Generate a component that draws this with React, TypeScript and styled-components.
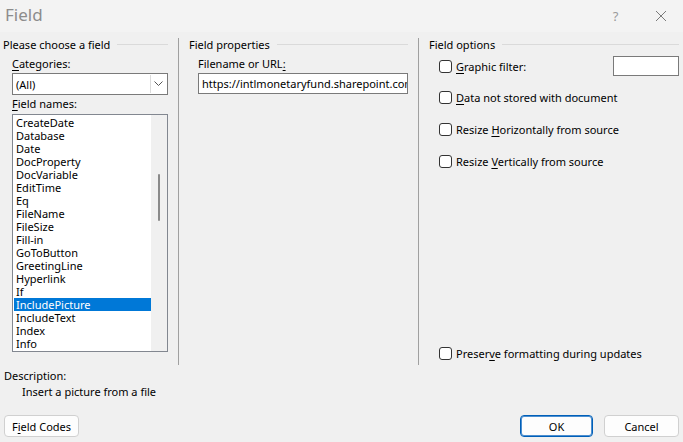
import React from "react";
import styled, { createGlobalStyle } from "styled-components";

const GlobalStyle = createGlobalStyle`
  html, body {
    margin: 0;
    padding: 0;
    background: #f0f0f0;
  }
  body {
    font-family: "Noto Sans", "Segoe UI", sans-serif;
    font-size: 11px;
    color: #000;
  }
`;

const FIELD_NAMES = [
  "CreateDate",
  "Database",
  "Date",
  "DocProperty",
  "DocVariable",
  "EditTime",
  "Eq",
  "FileName",
  "FileSize",
  "Fill-in",
  "GoToButton",
  "GreetingLine",
  "Hyperlink",
  "If",
  "IncludePicture",
  "IncludeText",
  "Index",
  "Info",
];

const SELECTED = "IncludePicture";

const Dialog = styled.div`
  width: 683px;
  height: 442px;
  display: flex;
  flex-direction: column;
  background: #f0f0f0;
  overflow: hidden;
`;

const TitleBar = styled.div`
  height: 32px;
  flex: none;
  display: flex;
  align-items: center;
  background: #f3f3f3;
  padding-left: 5px;
`;

const Title = styled.div`
  font-size: 17px;
  color: #8c8c8c;
  flex: 1;
  margin-top: -4px;
`;

const TitleButton = styled.div`
  width: 45px;
  height: 32px;
  display: flex;
  align-items: center;
  justify-content: center;
  color: #9a9a9a;
  font-size: 13px;
`;

const Columns = styled.div`
  display: flex;
  height: 327px;
  margin-top: 6px;
  padding-left: 3px;
`;

const Column = styled.div<{ $w: number; $first?: boolean; $last?: boolean }>`
  width: ${(p) => p.$w}px;
  box-sizing: border-box;
  flex: none;
  display: flex;
  flex-direction: column;
  padding: 0 ${(p) => (p.$last ? 4 : 10)}px 0 ${(p) => (p.$first ? 0 : 10)}px;
  border-right: ${(p) => (p.$last ? "none" : "1px solid #a0a0a0")};
`;

const GroupHeader = styled.div`
  display: flex;
  align-items: center;
  height: 13px;
  gap: 7px;
  white-space: nowrap;
  &::after {
    content: "";
    flex: 1;
    height: 1px;
    background: #dadada;
  }
`;

const FieldLabel = styled.div<{ $top: number }>`
  height: 16px;
  line-height: 16px;
  margin-top: ${(p) => p.$top}px;
  padding-left: 9px;
  white-space: nowrap;
`;

const Key = styled.span`
  text-decoration: underline;
  text-underline-offset: 2px;
`;

const Combo = styled.div`
  margin: 1px 0 0 9px;
  height: 22px;
  box-sizing: border-box;
  border: 1px solid #7a7a7a;
  background: #fff;
  display: flex;
  align-items: center;
`;

const ComboValue = styled.div`
  flex: 1;
  padding-left: 3px;
`;

const ComboArrow = styled.div`
  width: 15px;
  height: 18px;
  border-left: 1px solid #dcdcdc;
  display: flex;
  align-items: center;
  justify-content: center;
  margin-right: 1px;
`;

const ListBox = styled.div`
  margin: 2px 0 0 9px;
  height: 238px;
  box-sizing: border-box;
  border: 1px solid #828790;
  background: #fff;
  display: flex;
`;

const ListItems = styled.div`
  flex: 1;
  padding: 1px 0 0 1px;
  overflow: hidden;
`;

const ListItem = styled.div<{ $selected?: boolean }>`
  height: 13px;
  line-height: 13px;
  padding-left: 2px;
  background: ${(p) => (p.$selected ? "#0078d7" : "transparent")};
  color: ${(p) => (p.$selected ? "#fff" : "#000")};
  white-space: nowrap;
`;

const ScrollTrack = styled.div`
  width: 16px;
  background: #f0f0f0;
  padding-top: 59px;
  display: flex;
  justify-content: center;
`;

const ScrollThumb = styled.div`
  width: 2px;
  height: 47px;
  background: #8a8a8a;
  border-radius: 1px;
`;

const TextInput = styled.div`
  margin: 1px 0 0 9px;
  height: 21px;
  box-sizing: border-box;
  border: 1px solid #7a7a7a;
  background: #fff;
  padding-left: 3px;
  line-height: 19px;
  white-space: nowrap;
  overflow: hidden;
`;

const OptionRow = styled.div<{ $top: number }>`
  display: flex;
  align-items: center;
  height: 20px;
  margin-top: ${(p) => p.$top}px;
  padding-left: 10px;
  gap: 4px;
  white-space: nowrap;
`;

const Spacer = styled.div`
  flex: 1;
`;

const CheckBox = styled.div`
  width: 13px;
  height: 13px;
  box-sizing: border-box;
  border: 1px solid #333;
  border-radius: 3px;
  background: #fff;
`;

const FilterInput = styled.div`
  width: 66px;
  height: 20px;
  box-sizing: border-box;
  border: 1px solid #7a7a7a;
  background: #fff;
`;

const BottomRow = styled.div`
  margin-top: auto;
  margin-bottom: 2px;
`;

const Description = styled.div`
  margin-top: 3px;
  padding-left: 4px;
  line-height: 16px;
`;

const DescriptionText = styled.div`
  padding-left: 22px;
  line-height: 16px;
`;

const Footer = styled.div`
  display: flex;
  align-items: center;
  padding: 0 4px;
  margin-top: 15px;
  gap: 11px;
`;

const Button = styled.div<{ $width: number; $default?: boolean }>`
  width: ${(p) => p.$width}px;
  height: 22px;
  box-sizing: border-box;
  border: 1px solid ${(p) => (p.$default ? "#005fb8" : "#d0d0d0")};
  border-radius: 4px;
  background: #fdfdfd;
  display: flex;
  align-items: center;
  justify-content: center;
  box-shadow: ${(p) => (p.$default ? "inset 0 0 0 1px #4d8fd0" : "none")};
`;

const Check = ({ children }: { children: React.ReactNode }) => (
  <>
    <CheckBox />
    <span>{children}</span>
  </>
);

export default function App() {
  return (
    <>
      <GlobalStyle />
      <Dialog>
        <TitleBar>
          <Title>Field</Title>
          <TitleButton>?</TitleButton>
          <TitleButton>
            <svg width="12" height="12" viewBox="0 0 12 12">
              <path d="M1 1 L11 11 M11 1 L1 11" stroke="#7a7a7a" strokeWidth="1" />
            </svg>
          </TitleButton>
        </TitleBar>

        <Columns>
          <Column $w={176} $first>
            <GroupHeader>Please choose a field</GroupHeader>
            <FieldLabel $top={5}>
              <Key>C</Key>ategories:
            </FieldLabel>
            <Combo>
              <ComboValue>(All)</ComboValue>
              <ComboArrow>
                <svg width="9" height="6" viewBox="0 0 9 6">
                  <path d="M0.5 0.5 L4.5 4.5 L8.5 0.5" stroke="#555" fill="none" />
                </svg>
              </ComboArrow>
            </Combo>
            <FieldLabel $top={1}>
              <Key>F</Key>ield names:
            </FieldLabel>
            <ListBox>
              <ListItems>
                {FIELD_NAMES.map((n) => (
                  <ListItem key={n} $selected={n === SELECTED}>
                    {n}
                  </ListItem>
                ))}
              </ListItems>
              <ScrollTrack>
                <ScrollThumb />
              </ScrollTrack>
            </ListBox>
          </Column>

          <Column $w={240}>
            <GroupHeader>Field properties</GroupHeader>
            <FieldLabel $top={5}>
              Filename or URL<Key>:</Key>
            </FieldLabel>
            <TextInput>https://intlmonetaryfund.sharepoint.com</TextInput>
          </Column>

          <Column $w={264} $last>
            <GroupHeader>Field options</GroupHeader>
            <OptionRow $top={5}>
              <Check>
                <Key>G</Key>raphic filter:
              </Check>
              <Spacer />
              <FilterInput />
            </OptionRow>
            <OptionRow $top={11}>
              <Check>
                <Key>D</Key>ata not stored with document
              </Check>
            </OptionRow>
            <OptionRow $top={12}>
              <Check>
                Resize <Key>H</Key>orizontally from source
              </Check>
            </OptionRow>
            <OptionRow $top={12}>
              <Check>
                Resize <Key>V</Key>ertically from source
              </Check>
            </OptionRow>
            <BottomRow>
              <OptionRow $top={0}>
                <Check>
                  Preser<Key>v</Key>e formatting during updates
                </Check>
              </OptionRow>
            </BottomRow>
          </Column>
        </Columns>

        <Description>Description:</Description>
        <DescriptionText>Insert a picture from a file</DescriptionText>

        <Footer>
          <Button $width={75}>
            F<Key>i</Key>eld Codes
          </Button>
          <Spacer />
          <Button $width={73} $default>
            OK
          </Button>
          <Button $width={75}>Cancel</Button>
        </Footer>
      </Dialog>
    </>
  );
}
